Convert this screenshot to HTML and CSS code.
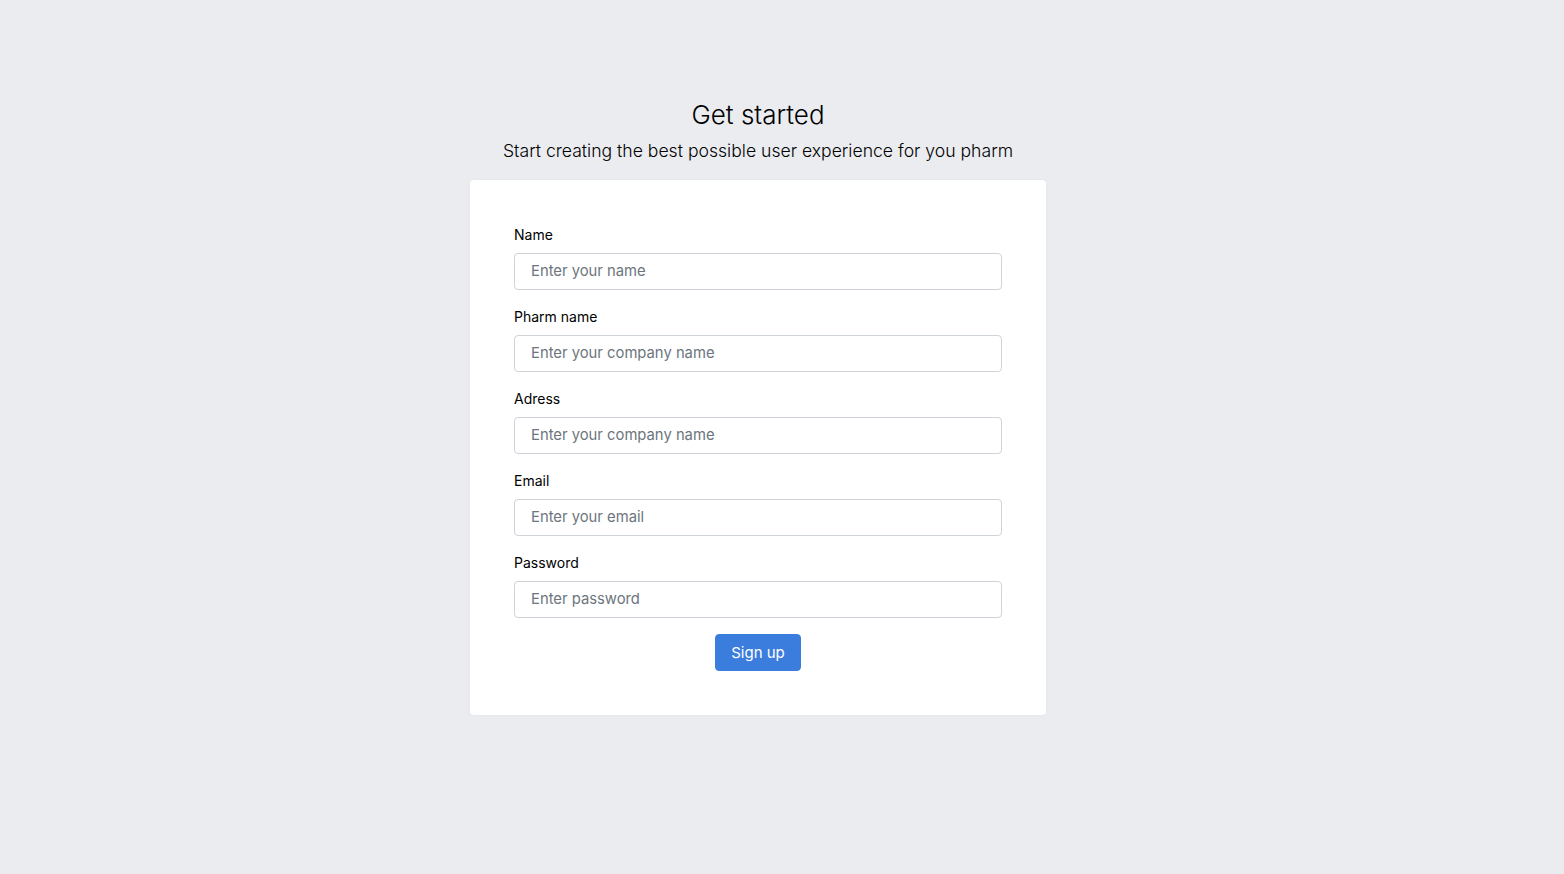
FILE: index.html
```html
<!DOCTYPE html>
<html lang="en">
<head>
<meta charset="utf-8">
<title>Get started</title>
<link rel="stylesheet" href="styles.css">
</head>
<body>
<main class="page">
  <div class="intro">
    <h1 class="title">Get started</h1>
    <p class="lead">Start creating the best possible user experience for you pharm</p>
  </div>
  <div class="card">
    <form class="form">
      <div class="field">
        <label class="label">Name</label>
        <input class="input" type="text" placeholder="Enter your name">
      </div>
      <div class="field">
        <label class="label">Pharm name</label>
        <input class="input" type="text" placeholder="Enter your company name">
      </div>
      <div class="field">
        <label class="label">Adress</label>
        <input class="input" type="text" placeholder="Enter your company name">
      </div>
      <div class="field">
        <label class="label">Email</label>
        <input class="input" type="email" placeholder="Enter your email">
      </div>
      <div class="field">
        <label class="label">Password</label>
        <input class="input" type="password" placeholder="Enter password">
      </div>
      <div class="actions">
        <button class="btn" type="button">Sign up</button>
      </div>
    </form>
  </div>
</main>
</body>
</html>
```

FILE: styles.css
```css
* { box-sizing: border-box; }
html, body { margin: 0; padding: 0; }
body {
  background: #ebecf0;
  font-family: Inter, "Noto Sans", sans-serif;
  color: #000;
  min-height: 874px;
}
.page {
  display: flex;
  flex-direction: column;
  align-items: center;
  padding-top: 98px;
  padding-right: 48px;
}
.intro { text-align: center; margin-bottom: 17px; }
.title {
  margin: 0;
  font-size: 26px;
  font-weight: 300;
  line-height: 34px;
  color: #000;
}
.lead {
  margin: 7px 0 0;
  font-size: 17.6px;
  font-weight: 300;
  line-height: 24px;
  color: #000;
}
.card {
  width: 576px;
  background: #fff;
  border-radius: 4px;
  box-shadow: 0 0 3px rgba(0,0,0,0.04);
  padding: 44px;
}
.form { display: flex; flex-direction: column; gap: 16px; }
.field { display: flex; flex-direction: column; }
.label {
  font-size: 14px;
  line-height: 21px;
  margin-bottom: 8px;
  color: #000;
}
.input {
  height: 37px;
  border: 1px solid #ced4da;
  border-radius: 4px;
  padding: 0 16px 1px;
  font-family: inherit;
  font-size: 14.8px;
  color: #495057;
  background: #fff;
}
.input::placeholder { color: #6c757d; }
.actions { display: flex; justify-content: center; margin-top: 0; }
.btn {
  height: 37px;
  padding: 0 15px;
  background: #3b7ddd;
  border: 1px solid #3b7ddd;
  border-radius: 4px;
  color: #fff;
  font-family: inherit;
  font-size: 15px;
}
```
